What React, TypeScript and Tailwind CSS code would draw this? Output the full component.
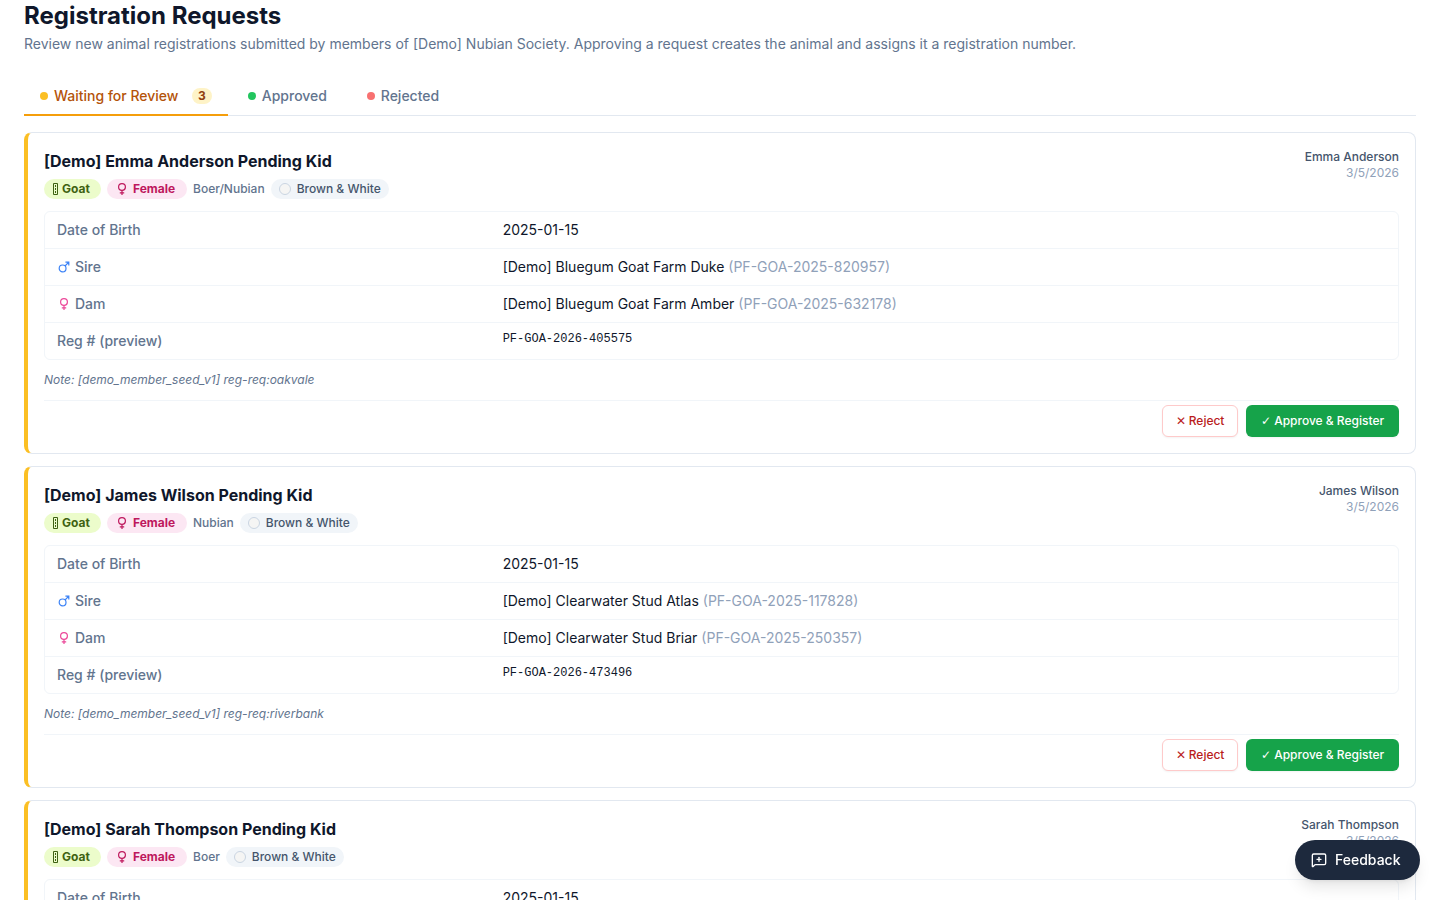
import { MessageSquarePlus } from "lucide-react"

type Parent = { name: string; reg: string }

type RegistrationRequest = {
  id: number
  animal: string
  breed: string
  color: string
  dob: string
  sire: Parent
  dam: Parent
  regPreview: string
  note: string
  submittedBy: string
  submittedOn: string
}

const requests: RegistrationRequest[] = [
  {
    id: 1,
    animal: "[Demo] Emma Anderson Pending Kid",
    breed: "Boer/Nubian",
    color: "Brown & White",
    dob: "2025-01-15",
    sire: { name: "[Demo] Bluegum Goat Farm Duke", reg: "PF-GOA-2025-820957" },
    dam: { name: "[Demo] Bluegum Goat Farm Amber", reg: "PF-GOA-2025-632178" },
    regPreview: "PF-GOA-2026-405575",
    note: "[demo_member_seed_v1] reg-req:oakvale",
    submittedBy: "Emma Anderson",
    submittedOn: "3/5/2026",
  },
  {
    id: 2,
    animal: "[Demo] James Wilson Pending Kid",
    breed: "Nubian",
    color: "Brown & White",
    dob: "2025-01-15",
    sire: { name: "[Demo] Clearwater Stud Atlas", reg: "PF-GOA-2025-117828" },
    dam: { name: "[Demo] Clearwater Stud Briar", reg: "PF-GOA-2025-250357" },
    regPreview: "PF-GOA-2026-473496",
    note: "[demo_member_seed_v1] reg-req:riverbank",
    submittedBy: "James Wilson",
    submittedOn: "3/5/2026",
  },
  {
    id: 3,
    animal: "[Demo] Sarah Thompson Pending Kid",
    breed: "Boer",
    color: "Brown & White",
    dob: "2025-01-15",
    sire: { name: "[Demo] Hillview Stud Rex", reg: "PF-GOA-2025-340912" },
    dam: { name: "[Demo] Hillview Stud Willow", reg: "PF-GOA-2025-518264" },
    regPreview: "PF-GOA-2026-619038",
    note: "[demo_member_seed_v1] reg-req:hillview",
    submittedBy: "Sarah Thompson",
    submittedOn: "3/5/2026",
  },
]

function FemaleIcon({ className }: { className: string }) {
  return (
    <svg viewBox="0 0 14 14" className={className} fill="none" stroke="currentColor" strokeWidth="1.2" aria-hidden="true">
      <circle cx="7" cy="5" r="3.4" />
      <path d="M7 8.4V13M4.8 10.9h4.4" />
    </svg>
  )
}

function MaleIcon({ className }: { className: string }) {
  return (
    <svg viewBox="0 0 14 14" className={className} fill="none" stroke="currentColor" strokeWidth="1.2" aria-hidden="true">
      <circle cx="5.6" cy="8.4" r="3.4" />
      <path d="M8 6l3.8-3.8M8.4 2.2h3.4v3.4" />
    </svg>
  )
}

function GoatIcon() {
  return (
    <svg viewBox="0 0 6 12" className="h-3 w-1.5" fill="none" stroke="currentColor" aria-hidden="true">
      <path d="M1.5 .5h4v11h-4z" />
      <path d="M3.5 2v8" strokeDasharray="2 1" />
    </svg>
  )
}

function RequestCard({ request }: { request: RegistrationRequest }) {
  return (
    <article className="rounded-lg border border-l-4 border-slate-200 border-l-[#fbbf24] bg-white p-4">
      <div className="flex items-start justify-between gap-4">
        <div>
          <h2 className="text-base font-bold text-slate-900">{request.animal}</h2>
          <div className="mt-1.5 flex flex-wrap items-center gap-1.5 text-xs">
            <span className="inline-flex min-w-[57px] items-center gap-1 rounded-full bg-[#ecfccb] px-2 py-0.5 font-bold text-[#3f6212]">
              <GoatIcon />
              Goat
            </span>
            <span className="inline-flex min-w-20 items-center gap-1 rounded-full bg-[#fce7f3] px-2 py-0.5 font-bold text-[#be185d]">
              <FemaleIcon className="size-3.5" />
              Female
            </span>
            <span className="font-medium text-slate-500">{request.breed}</span>
            <span className="inline-flex min-w-[118px] items-center gap-1.5 rounded-full bg-slate-100 px-2 py-0.5 font-medium text-slate-600">
              <span className="size-3 rounded-full border border-slate-300 bg-[#f5f5f4]" />
              {request.color}
            </span>
          </div>
        </div>
        <div className="text-right text-xs">
          <p className="font-medium text-slate-600">{request.submittedBy}</p>
          <p className="text-slate-400">{request.submittedOn}</p>
        </div>
      </div>

      <dl className="mt-3 divide-y divide-slate-100 rounded-md border border-slate-100 text-sm">
        <div className="grid grid-cols-3 gap-2 px-3 py-2">
          <dt className="font-medium text-slate-500">Date of Birth</dt>
          <dd className="col-span-2 text-slate-900">{request.dob}</dd>
        </div>
        <div className="grid grid-cols-3 gap-2 px-3 py-2">
          <dt className="flex items-center gap-1 font-medium text-slate-500">
            <MaleIcon className="size-3.5 text-[#3b82f6]" />
            Sire
          </dt>
          <dd className="col-span-2 text-slate-900">
            {request.sire.name} <span className="text-slate-400">({request.sire.reg})</span>
          </dd>
        </div>
        <div className="grid grid-cols-3 gap-2 px-3 py-2">
          <dt className="flex items-center gap-1 font-medium text-slate-500">
            <FemaleIcon className="size-3.5 text-[#ec4899]" />
            Dam
          </dt>
          <dd className="col-span-2 text-slate-900">
            {request.dam.name} <span className="text-slate-400">({request.dam.reg})</span>
          </dd>
        </div>
        <div className="grid grid-cols-3 gap-2 px-3 py-2">
          <dt className="font-medium text-slate-500">Reg # (preview)</dt>
          <dd className="col-span-2 font-['Liberation_Mono',monospace] text-xs text-slate-900">{request.regPreview}</dd>
        </div>
      </dl>

      <p className="mt-3 text-xs text-slate-500 italic">Note: {request.note}</p>

      <div className="mt-3 flex justify-end gap-2 border-t border-slate-100 pt-1 text-xs font-medium">
        <button
          type="button"
          className="h-8 min-w-[76px] rounded-md border border-[#fecaca] bg-white px-3 text-[#b91c1c] shadow-xs hover:bg-red-50"
        >
          ✕ Reject
        </button>
        <button
          type="button"
          className="h-8 min-w-[153px] rounded-md bg-[#16a34a] px-3 text-white shadow-xs hover:bg-green-700"
        >
          <span className="font-['DejaVu_Sans',sans-serif] font-normal">✓</span> Approve &amp; Register
        </button>
      </div>
    </article>
  )
}

export default function App() {
  return (
    <div className="min-h-screen bg-white px-6 pb-6 font-['Inter',sans-serif]">
      <header>
        <h1 className="text-2xl font-bold text-slate-900">Registration Requests</h1>
        <p className="mt-0.5 text-sm text-slate-500">
          Review new animal registrations submitted by members of [Demo] Nubian Society. Approving a request creates the
          animal and assigns it a registration number.
        </p>
      </header>

      <nav className="mt-6 flex gap-1 border-b border-slate-200 text-sm font-medium text-slate-500">
        <button
          type="button"
          className="-mb-px flex items-center gap-1.5 border-b-2 border-[#f59e0b] px-4 py-2 text-[#b45309]"
        >
          <span className="size-2 rounded-full bg-[#fbbf24]" />
          <span className="min-w-32 text-left">Waiting for Review</span>
          <span className="ml-1 rounded-full bg-[#fef3c7] px-1.5 text-xs font-bold text-[#92400e]">3</span>
        </button>
        <button
          type="button"
          className="-mb-px flex min-w-[115px] items-center gap-1.5 border-b-2 border-transparent px-4 py-2"
        >
          <span className="size-2 rounded-full bg-[#22c55e]" />
          Approved
        </button>
        <button
          type="button"
          className="-mb-px flex min-w-[109px] items-center gap-1.5 border-b-2 border-transparent px-4 py-2"
        >
          <span className="size-2 rounded-full bg-[#f87171]" />
          Rejected
        </button>
      </nav>

      <main className="mt-4 flex flex-col gap-3">
        {requests.map((request) => (
          <RequestCard key={request.id} request={request} />
        ))}
      </main>

      <button
        type="button"
        className="fixed right-5 bottom-5 flex h-10 min-w-[125px] items-center gap-2 rounded-full bg-slate-800 px-4 text-sm font-medium text-white shadow-lg hover:bg-slate-700"
      >
        <MessageSquarePlus className="size-4" />
        Feedback
      </button>
    </div>
  )
}
